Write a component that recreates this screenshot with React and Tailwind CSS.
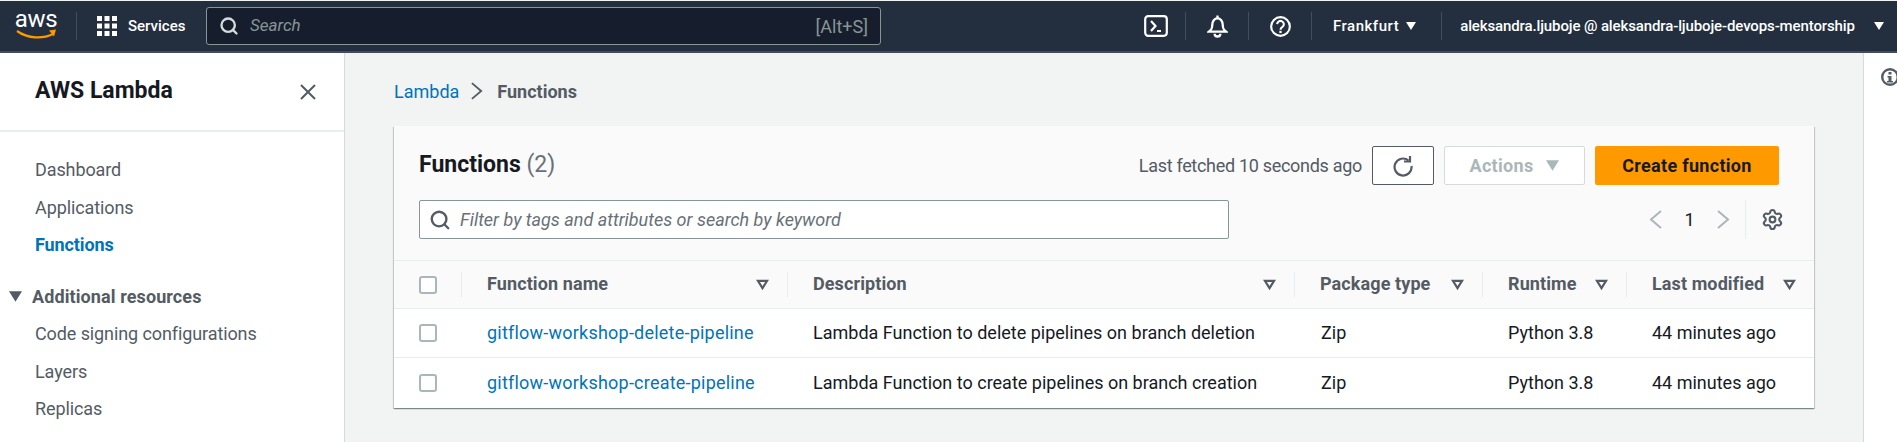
import React from 'react';
import { Search, Settings } from 'lucide-react';

function Caret({ className }) {
  return (
    <svg viewBox="0 0 10 8" className={className}>
      <path d="M0 0h10L5 8z" fill="currentColor" />
    </svg>
  );
}

function SortIcon() {
  return (
    <svg viewBox="0 0 14 12" className="w-[13px] h-[11px] text-[#545b64] shrink-0">
      <path d="M2 2h10L7 10z" fill="none" stroke="currentColor" strokeWidth="2.4" />
    </svg>
  );
}

function Chevron({ left, className }) {
  return (
    <svg viewBox="0 0 13 19" className={className}>
      <path d={left ? 'M12 1L2 9.5 12 18' : 'M1 1l10 8.5L1 18'} fill="none" stroke="currentColor" strokeWidth="2" />
    </svg>
  );
}

function AwsLogo() {
  return (
    <div className="flex flex-col items-center w-[40px] leading-none">
      <span className="text-white text-[24px] leading-[17px] tracking-[-0.3px] -mt-[3px]">aws</span>
      <svg viewBox="0 0 40 10" className="w-[40px] h-[10px] mt-[1px]">
        <path d="M1 2c11 8 26 8 36 3" fill="none" stroke="#ff9900" strokeWidth="2.2" />
        <path d="M33 1.5l7-1-2 7z" fill="#ff9900" />
      </svg>
    </div>
  );
}

function NavItem({ label, active }) {
  return (
    <div className={`h-[37.5px] flex items-center pl-[35px] tracking-[-0.1px] ${active ? 'text-[#0073bb] font-bold' : 'text-[#545b64]'}`}>
      {label}
    </div>
  );
}

function Sidebar() {
  return (
    <aside className="w-[345px] shrink-0 bg-white border-r border-[#d5dbdb]">
      <div className="h-[79px] border-b-2 border-[#eaeded] flex items-center justify-between pl-[35px] pr-[28px]">
        <h2 className="text-[23px] font-bold text-[#16191f]">AWS Lambda</h2>
        <svg viewBox="0 0 16 16" className="w-[16px] h-[16px] text-[#545b64]">
          <path d="M1 1l14 14M15 1L1 15" fill="none" stroke="currentColor" strokeWidth="2" />
        </svg>
      </div>
      <nav className="pt-[19px]">
        <NavItem label="Dashboard" />
        <NavItem label="Applications" />
        <NavItem label="Functions" active />
        <div className="h-[37.5px] mt-[14px] flex items-center pl-[9px] gap-[10px] text-[#545b64] font-bold tracking-[0.1px]">
          <Caret className="w-[13px] h-[11px]" />
          Additional resources
        </div>
        <NavItem label="Code signing configurations" />
        <NavItem label="Layers" />
        <NavItem label="Replicas" />
      </nav>
    </aside>
  );
}

function Checkbox() {
  return <div className="w-[18px] h-[18px] rounded-[3px] border-2 border-[#aab7b8] bg-white"></div>;
}

const columns = [
  { label: 'Function name', width: 'w-[326px]' },
  { label: 'Description', width: 'w-[507px]' },
  { label: 'Package type', width: 'w-[188px]' },
  { label: 'Runtime', width: 'w-[144px]' },
  { label: 'Last modified', width: 'w-[187px]' },
];

const rows = [
  { name: 'gitflow-workshop-delete-pipeline', desc: 'Lambda Function to delete pipelines on branch deletion' },
  { name: 'gitflow-workshop-create-pipeline', desc: 'Lambda Function to create pipelines on branch creation' },
];

function Row({ row, last }) {
  return (
    <div className={`flex items-center bg-white text-[#16191f] ${last ? 'h-[50px]' : 'h-[49px] border-b border-[#eaeded]'}`}>
      <div className="w-[68px] pl-[25px] shrink-0"><Checkbox /></div>
      <div className="w-[325px] pl-[25px] pb-[2px] shrink-0 text-[#0073bb] whitespace-nowrap tracking-[0.22px]">{row.name}</div>
      <div className="w-[508px] pl-[26px] pb-[2px] shrink-0 whitespace-nowrap">{row.desc}</div>
      <div className="w-[188px] pl-[26px] pb-[2px] shrink-0">Zip</div>
      <div className="w-[144px] pl-[25px] pb-[2px] shrink-0 whitespace-nowrap">Python 3.8</div>
      <div className="w-[187px] pl-[25px] pb-[2px] shrink-0 whitespace-nowrap">44 minutes ago</div>
    </div>
  );
}

function FunctionsCard() {
  return (
    <section className="bg-[#fafafa] shadow-[0_1px_1px_0_rgba(0,28,36,0.3),1px_1px_1px_0_rgba(0,28,36,0.15),-1px_1px_1px_0_rgba(0,28,36,0.15)]">
      <div className="h-[135px] px-[25px] pt-[20px] border-b border-[#eaeded]">
        <div className="flex items-center h-[39px]">
          <h1 className="text-[23px] font-bold text-[#16191f]">
            Functions <span className="font-normal text-[#687078]">(2)</span>
          </h1>
          <span className="ml-auto text-[#545b64] mr-[10px] tracking-[-0.3px]">Last fetched 10 seconds ago</span>
          <button className="w-[62px] h-[39px] border border-[#545b64] rounded-[2px] bg-white flex items-center justify-center text-[#545b64]">
            <svg viewBox="0 0 22 22" className="w-[22px] h-[22px]">
              <path d="M16.5 5.5A8.5 8.5 0 1 0 19.5 11" fill="none" stroke="currentColor" strokeWidth="2.2" />
              <path d="M12 6.5h6V1" fill="none" stroke="currentColor" strokeWidth="2.2" />
            </svg>
          </button>
          <button className="ml-[10px] w-[141px] h-[39px] pb-[1px] border border-[#d5dbdb] rounded-[2px] bg-white flex items-center justify-center gap-[13px] text-[#aab7b8] font-bold tracking-[0.3px]">
            Actions
            <Caret className="w-[13px] h-[11px]" />
          </button>
          <button className="ml-[10px] w-[184px] h-[39px] pb-[1px] rounded-[2px] bg-[#ff9900] text-[#16191f] font-bold mr-[10px] tracking-[0.3px]">
            Create function
          </button>
        </div>
        <div className="flex items-center mt-[15px] h-[39px]">
          <div className="w-[810px] h-[39px] border border-[#879596] rounded-[2px] bg-white flex items-center pl-[9px]">
            <Search className="w-[22px] h-[22px] text-[#545b64] mr-[9px]" strokeWidth={2.6} />
            <span className="italic text-[#687078] whitespace-nowrap">Filter by tags and attributes or search by keyword</span>
          </div>
          <div className="ml-auto flex items-center h-[39px] mr-[5px]">
            <Chevron left className="w-[13px] h-[19px] text-[#aab7b8]" />
            <span className="w-[55px] text-center text-[#16191f]">1</span>
            <Chevron className="w-[13px] h-[19px] text-[#aab7b8]" />
            <div className="ml-[15px] h-[39px] border-l border-[#eaeded] pl-[15px] flex items-center">
              <Settings className="w-[23px] h-[23px] text-[#545b64]" strokeWidth={2.2} />
            </div>
          </div>
        </div>
      </div>
      <div className="h-[48px] flex items-center border-b border-[#eaeded] text-[#545b64] font-bold">
        <div className="w-[68px] h-[25px] shrink-0 pl-[25px] border-r border-[#eaeded] flex items-center"><Checkbox /></div>
        {columns.map((col, i) => (
          <div key={col.label} className={`${col.width} shrink-0 h-[25px] flex items-center justify-between pl-[25px] pr-[18px] whitespace-nowrap ${i < 4 ? 'border-r border-[#eaeded]' : ''}`}>
            <span className="pb-[2px] tracking-[0.1px]">{col.label}</span>
            <SortIcon />
          </div>
        ))}
      </div>
      {rows.map((row, i) => (
        <Row key={row.name} row={row} last={i === rows.length - 1} />
      ))}
    </section>
  );
}

export default function App() {
  return (
    <div className="h-[442px] overflow-hidden bg-[#f2f3f3] text-[18px] font-['Roboto','Liberation_Sans',sans-serif] pt-[1px]">
      <header className="h-[52px] bg-[#232f3e] border-b-2 border-[#414d5c] flex items-center text-white text-[15px]">
        <div className="ml-[16px]"><AwsLogo /></div>
        <div className="ml-[20px] h-[28px] border-l border-[#414d5c]"></div>
        <svg viewBox="0 0 20 20" className="ml-[20px] w-[20px] h-[20px]">
          {[0, 7.5, 15].map((y) => [0, 7.5, 15].map((x) => <rect key={`${x}-${y}`} x={x} y={y} width="5" height="5" fill="white" />))}
        </svg>
        <span className="ml-[11px] font-medium w-[56px]">Services</span>
        <div className="ml-[22px] w-[675px] h-[38px] bg-[#161e2d] border border-[#879596] rounded-[3px] flex items-center pl-[12px] pr-[12px]">
          <Search className="w-[20px] h-[20px] text-[#d5dbdb]" strokeWidth={2.8} />
          <span className="ml-[11px] italic text-[#879596] text-[17px]">Search</span>
          <span className="ml-auto text-[#879596] text-[18px]">[Alt+S]</span>
        </div>
        <svg viewBox="0 0 24 22" className="ml-[263px] w-[24px] h-[22px]">
          <rect x="1.2" y="1.2" width="21.6" height="19.6" rx="3" fill="none" stroke="white" strokeWidth="2.2" />
          <path d="M7 6l4.5 5L7 16M13 16h4" fill="none" stroke="white" strokeWidth="2.2" />
        </svg>
        <div className="ml-[17px] h-[28px] border-l border-[#414d5c]"></div>
        <svg viewBox="0 0 22 24" className="ml-[21px] w-[21px] h-[24px]">
          <path d="M2 18c2.5-2 3.5-3 3.5-7 0-4 2.4-7 5.5-7s5.500 3 5.500 7c0 4 1 5 3.500 7z" fill="none" stroke="white" strokeWidth="2.4" />
          <path d="M11 1v3M8 20a3 3 0 0 0 6 0" fill="none" stroke="white" strokeWidth="2.4" />
        </svg>
        <div className="ml-[20px] h-[28px] border-l border-[#414d5c]"></div>
        <svg viewBox="0 0 22 22" className="ml-[21px] w-[21px] h-[21px]">
          <circle cx="11" cy="11" r="9.800" fill="none" stroke="white" strokeWidth="2.2" />
          <path d="M7.500 8.500a3.500 3.500 0 1 1 5.500 3c-1.300.8-2 1.500-2 3" fill="none" stroke="white" strokeWidth="2.200" />
          <rect x="9.800" y="15.500" width="2.400" height="2.400" fill="white" />
        </svg>
        <div className="ml-[20px] h-[28px] border-l border-[#414d5c]"></div>
        <span className="ml-[21px] font-medium tracking-[0.5px]">Frankfurt</span>
        <Caret className="ml-[7px] w-[10px] h-[8px]" />
        <div className="ml-[25px] h-[28px] border-l border-[#414d5c]"></div>
        <span className="ml-[18px] font-medium whitespace-nowrap tracking-[-0.12px]">aleksandra.ljuboje @ aleksandra-ljuboje-devops-mentorship</span>
        <Caret className="ml-[19px] w-[10px] h-[8px]" />
      </header>
      <div className="flex h-[389px]">
        <Sidebar />
        <main className="flex-1 min-w-0 pt-[26px] pl-[49px] pr-[49px]">
          <div className="flex items-center h-[24px] mb-[23px]">
            <span className="text-[#0073bb]">Lambda</span>
            <Chevron className="ml-[12px] mr-[14px] w-[12px] h-[18px] text-[#545b64]" />
            <span className="text-[#545b64] font-bold">Functions</span>
          </div>
          <FunctionsCard />
        </main>
        <aside className="w-[34px] shrink-0 bg-white border-l border-[#d5dbdb] pl-[17px] pt-[15px]">
          <svg viewBox="0 0 18 18" className="w-[18px] h-[18px] text-[#545b64]">
            <circle cx="9" cy="9" r="7.800" fill="none" stroke="currentColor" strokeWidth="2.400" />
            <rect x="7.500" y="4" width="3" height="2.500" fill="currentColor" />
            <path d="M6.500 8h4v5h1.500v1.500H6v-1.500h1.500V9.500h-1z" fill="currentColor" />
          </svg>
        </aside>
      </div>
    </div>
  );
}
